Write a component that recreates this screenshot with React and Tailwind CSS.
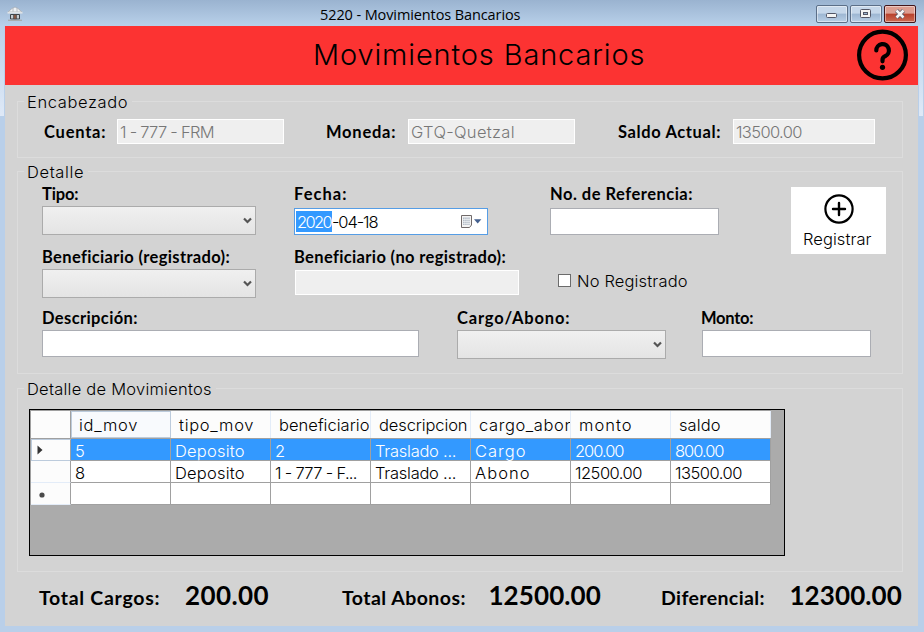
import { useLayoutEffect, useRef } from "react";

/* Single line of text whose tracking is tuned so it spans `w` pixels. */
function Fit({ w, className = "", children }) {
  const ref = useRef(null);
  useLayoutEffect(() => {
    const el = ref.current;
    el.style.letterSpacing = "0px";
    const natural = el.getBoundingClientRect().width;
    el.style.letterSpacing = `${(w + 1.5 - natural) / Math.max(1, children.length - 1)}px`;
  }, [w, children]);
  return (
    <span ref={ref} className={`block w-max shrink-0 self-start whitespace-pre ${className}`}>
      {children}
    </span>
  );
}

function Label({ w, className = "", children }) {
  return (
    <Fit w={w - 1} className={`font-[Lato] text-[16.5px] leading-5 font-bold ${className}`}>
      {children}
    </Fit>
  );
}

function Group({ title, w, className, children }) {
  return (
    <fieldset className={`w-[886px] border border-[#dcdcdc] ${className}`}>
      <legend className="ml-[6px] h-[17px] pr-1 pl-[3px]">
        <Fit w={w} className="leading-[19px]">{title}</Fit>
      </legend>
      {children}
    </fieldset>
  );
}

function ReadOnly({ className, w, children }) {
  return (
    <div className={`h-[25px] shrink-0 border border-white bg-[#efefef] pl-[2px] text-[#777] ${className}`}>
      {children && <Fit w={w} className="mt-[2px] leading-5">{children}</Fit>}
    </div>
  );
}

function Select({ className }) {
  return (
    <div className={`mt-[2px] flex h-[29px] items-center justify-end border border-[#ababab] bg-linear-to-b from-[#f0f0f0] to-[#e4e4e4] pr-[3px] ${className}`}>
      <svg width="9" height="8" viewBox="0 0 9 8" className="mt-px">
        <path d="M1 1.5 L4.5 5 L8 1.5" fill="none" stroke="#555" strokeWidth="2.2" />
      </svg>
    </div>
  );
}

function Input({ className }) {
  return <div className={`h-[27px] border border-[#abadb3] bg-white ${className}`} />;
}

const columns = [
  ["id_mov", 57], ["tipo_mov", 73], ["beneficiario", 89], ["descripcion", 87],
  ["cargo_abono", 104], ["monto", 51], ["saldo", 40],
];

const rows = [
  [["5", 8], ["Deposito", 68], ["2", 8], ["Traslado ...", 80], ["Cargo", 49], ["200.00", 48], ["800.00", 48]],
  [["8", 8], ["Deposito", 68], ["1 - 777 - F...", 81], ["Traslado ...", 80], ["Abono", 53], ["12500.00", 66], ["13500.00", 66]],
];

function DataGrid() {
  return (
    <div className="mt-[12px] ml-[11px] h-[147px] w-[756px] border border-black bg-[#ababab]">
      <div className="w-[741px] border-t border-l border-[#a0a0a0]">
        <div className="flex h-[28px] border-b border-[#a0a0a0] bg-[#fcfcfc]">
          <div className="w-[40px] border-r border-[#a0a0a0]" />
          {columns.map(([name, w], i) => (
            <div
              key={name}
              className={`w-[100px] overflow-hidden ${i === 0 ? "border border-[#bccbdc] bg-[#f8fafd] pt-[3px] pl-[7px]" : "border-r border-[#e3ecf8] pt-[4px] pl-[8px]"}`}
            >
              <Fit w={w} className="leading-5">{name}</Fit>
            </div>
          ))}
        </div>
        {rows.map((row, r) => (
          <div key={r} className="flex h-[22px]">
            <div className={`flex w-[40px] items-center bg-[#fcfcfc] pl-[5px] ${r === 0 ? "border border-[#bccbdc] border-r-[#a0a0a0]" : "border-r border-b border-r-[#a0a0a0] border-b-[#e3ecf8]"}`}>
              {r === 0 && (
                <svg width="6" height="10" viewBox="0 0 6 10">
                  <path d="M0.5 0.5 L5.5 5 L0.5 9.5 Z" fill="#333" />
                </svg>
              )}
            </div>
            {row.map(([text, w], i) => (
              <div
                key={i}
                className={`w-[100px] border-r border-b border-[#a0a0a0] pt-[3px] pl-[4px] ${r === 0 ? "bg-[#3399ff] text-white" : "bg-white"}`}
              >
                <Fit w={w} className="leading-[19px]">{text}</Fit>
              </div>
            ))}
          </div>
        ))}
        <div className="flex h-[22px]">
          <div className="flex w-[40px] items-center border-r border-b border-[#e3ecf8] border-r-[#a0a0a0] bg-[#fcfcfc] pl-[8px]">
            <svg width="6" height="6" viewBox="0 0 6 6" className="mt-[2px]">
              <circle cx="3" cy="3" r="2.6" fill="#4a4a4a" />
            </svg>
          </div>
          {columns.map(([name]) => (
            <div key={name} className="w-[100px] border-r border-b border-[#a0a0a0] bg-white" />
          ))}
        </div>
      </div>
    </div>
  );
}

function TitleBar() {
  const button = "flex h-[18px] w-[32px] items-center justify-center rounded-[2px] border shadow-[inset_0_0_0_1px_rgba(255,255,255,0.45)]";
  const blue = "border-[#5c6f88] bg-linear-to-b from-[#c6d7ea] from-45% via-[#9db6d2] via-50% to-[#b8cfe6]";
  return (
    <div className="flex h-[26px] items-start bg-linear-to-b from-[#9ab3d0] to-[#b9d1ea] pl-[7px]">
      <svg width="16" height="16" viewBox="0 0 16 16" className="mt-[6px]">
        <path d="M1 6 L5 2.5 L8 1 L11 2.5 L15 6 Z" fill="#eef1f4" stroke="#9ea5ad" strokeWidth="0.7" />
        <path d="M6 2 V6 M10 2 V6" stroke="#b4bac1" />
        <path d="M0.5 6.7 H15.5" stroke="#dfe3e7" strokeWidth="1.8" />
        <path d="M3.5 8.5 H12.5 V13 H3.5 Z" fill="#c7ccd1" stroke="#3d444a" />
        <path d="M6.5 8.5 H9.5 V13 H6.5 Z" fill="#855845" stroke="#3d444a" strokeWidth="0.6" />
        <path d="M1 14.3 H15" stroke="#a8aaab" strokeWidth="1.3" />
      </svg>
      <Fit w={199} className="mt-[5px] ml-[297px] font-['Open_Sans'] text-[14.5px] leading-5 font-normal">5220 - Movimientos Bancarios</Fit>
      <div className="mt-[5px] mr-[8px] ml-auto flex gap-[2px]">
        <div className={`${button} ${blue}`}>
          <svg width="12" height="6" viewBox="0 0 12 6" className="mt-[3px]">
            <rect x="0.5" y="0.5" width="10" height="4" rx="1" fill="#f4f4f4" stroke="#535666" />
          </svg>
        </div>
        <div className={`${button} ${blue}`}>
          <svg width="12" height="10" viewBox="0 0 12 10">
            <rect x="0.5" y="0.5" width="10" height="8" rx="1" fill="#f4f4f4" stroke="#535666" />
            <rect x="3.5" y="3.5" width="4" height="2" fill="#9db6d2" stroke="#535666" />
          </svg>
        </div>
        <div className={`${button} border-[#43161b] bg-linear-to-b from-[#dd9d90] from-45% via-[#b8402b] via-50% to-[#cc6a52]`}>
          <svg width="12" height="10" viewBox="0 0 12 10">
            <path d="M2.5 1.5 L9.5 8.5 M9.5 1.5 L2.5 8.5" stroke="#535666" strokeWidth="4" />
            <path d="M2.5 1.5 L9.5 8.5 M9.5 1.5 L2.5 8.5" stroke="#f6f6f6" strokeWidth="2.6" />
          </svg>
        </div>
      </div>
    </div>
  );
}

function Edge() {
  return (
    <div className="w-[5px] shrink-0 bg-[#b9cfe9]">
      <div className="h-[90px] w-[4px] bg-linear-to-b from-[#b9d1ea] to-[#dfe9f7]" />
    </div>
  );
}

function Total({ label, lw, value, vw, className }) {
  return (
    <div className={`flex shrink-0 items-start font-[Lato] font-bold ${className}`}>
      <Fit w={lw - 1} className="mt-[7px] text-[19.5px] leading-6">{label}</Fit>
      <Fit w={vw - 1} className="ml-auto text-[26px] leading-8">{value}</Fit>
    </div>
  );
}

export default function App() {
  return (
    <div className="h-[632px] w-[924px] overflow-hidden bg-[#b9cfe9] font-[Inter] text-[16.5px] font-light text-black">
      <TitleBar />
      <div className="flex h-[600px]">
        <Edge />
        <main className="w-[913px] bg-[#d3d3d3]">
          <header className="flex h-[59px] items-start bg-[#fc3332]">
            <Fit w={330} className="mt-[9px] ml-[308px] text-[29px] leading-10">Movimientos Bancarios</Fit>
            <svg width="52" height="52" viewBox="0 0 52 52" className="mt-[3px] mr-[9px] ml-auto" fill="none" stroke="#000">
              <circle cx="25.5" cy="26" r="23.4" strokeWidth="4.2" />
              <path d="M19.3 21.5 A6.3 6.3 0 1 1 28.1 27.2 Q25.5 28.4 25.5 31 V32.3" strokeWidth="4.2" strokeLinecap="round" />
              <circle cx="25.5" cy="38.3" r="2.6" fill="#000" stroke="none" />
            </svg>
          </header>

          <div className="flex flex-col pt-[8px] pl-[12px]">
            <Group title="Encabezado" w={99} className="h-[65px]">
              <div className="flex items-start pt-[9px] pl-[26px]">
                <div className="flex w-[73px] shrink-0"><Label w={61} className="mt-[3px]">Cuenta:</Label></div>
                <ReadOnly w={93} className="w-[167px]">1 - 777 - FRM</ReadOnly>
                <div className="ml-[42px] flex w-[82px] shrink-0"><Label w={69} className="mt-[3px]">Moneda:</Label></div>
                <ReadOnly w={102} className="w-[167px]">GTQ-Quetzal</ReadOnly>
                <div className="ml-[43px] flex w-[115px] shrink-0"><Label w={102} className="mt-[3px]">Saldo Actual:</Label></div>
                <ReadOnly w={65} className="w-[142px]">13500.00</ReadOnly>
              </div>
            </Group>

            <Group title="Detalle" w={55} className="mt-[5px] h-[211px]">
              <div className="flex items-start pt-[4px] pl-[24px]">
                <div className="w-[749px]">
                  <div className="flex h-[63px]">
                    <div className="flex w-[214px] flex-col">
                      <Label w={36}>Tipo:</Label>
                      <Select className="w-[214px]" />
                    </div>
                    <div className="ml-[38px] flex w-[194px] flex-col">
                      <Label w={52}>Fecha:</Label>
                      <div className="mt-[4px] flex h-[27px] w-[194px] items-start border border-[#569de5] bg-white pl-px">
                        <span className="mt-[2px] flex h-[21px] w-[36px] justify-center bg-[#3399ff] text-white">
                          <Fit w={34} className="mt-[1px] leading-5">2020</Fit>
                        </span>
                        <Fit w={45} className="mt-[3px] leading-5">-04-18</Fit>
                        <svg width="22" height="14" viewBox="0 0 22 14" className="mt-[6px] mr-[5px] ml-auto">
                          <path d="M1.5 0.5 H11.5 V10 L9.5 12.5 H1.5 Z" fill="#f4f4f4" stroke="#716a6a" />
                          <path d="M3 2.5 H10 V10 H3 Z" fill="#b4bdc8" />
                          <path d="M3 4.5 H10 M3 6.5 H10 M3 8.5 H10 M4.8 2.5 V10 M7 2.5 V10 M9 2.5 V10" stroke="#fff" strokeWidth="0.5" />
                          <path d="M14 4.2 H21.4 L17.7 8.6 Z" fill="#44608f" />
                        </svg>
                      </div>
                    </div>
                    <div className="ml-[62px] flex w-[169px] flex-col">
                      <Label w={142}>No. de Referencia:</Label>
                      <Input className="mt-[4px] w-[169px]" />
                    </div>
                  </div>
                  <div className="flex h-[61px]">
                    <div className="flex w-[214px] flex-col">
                      <Label w={187}>Beneficiario (registrado):</Label>
                      <Select className="w-[214px]" />
                    </div>
                    <div className="ml-[38px] flex w-[226px] flex-col">
                      <Label w={211}>Beneficiario (no registrado):</Label>
                      <ReadOnly className="mt-[3px] ml-[1px] w-[224px]" />
                    </div>
                    <div className="mt-[24px] ml-[38px] flex items-start">
                      <div className="mt-[3px] h-[13px] w-[13px] border border-[#6b6b6b] bg-white" />
                      <Fit w={109} className="ml-[6px] leading-5">No Registrado</Fit>
                    </div>
                  </div>
                </div>
                <button className="mt-[3px] flex h-[67px] w-[95px] shrink-0 flex-col items-center bg-white">
                  <svg width="30" height="30" viewBox="0 0 30 30" className="mt-[7px] ml-px" fill="none" stroke="#000">
                    <circle cx="15" cy="15" r="13.6" strokeWidth="2.2" />
                    <path d="M15 9 V21 M9 15 H21" strokeWidth="2.4" strokeLinecap="round" />
                  </svg>
                  <Fit w={67} className="mt-[5px] ml-[12px] leading-5">Registrar</Fit>
                </button>
              </div>
              <div className="flex pl-[24px]">
                <div className="flex w-[377px] flex-col">
                  <Label w={95}>Descripción:</Label>
                  <Input className="mt-[2px] w-[377px]" />
                </div>
                <div className="ml-[38px] flex w-[209px] flex-col">
                  <Label w={112}>Cargo/Abono:</Label>
                  <Select className="w-[209px]" />
                </div>
                <div className="ml-[35px] flex w-[170px] flex-col">
                  <Label w={52}>Monto:</Label>
                  <Input className="mt-[2px] ml-px w-[169px]" />
                </div>
              </div>
            </Group>

            <Group title="Detalle de Movimientos" w={183} className="mt-[6px] h-[192px]">
              <DataGrid />
            </Group>

            <div className="mt-[7px] flex pl-[22px]">
              <Total label="Total Cargos:" lw={120} value="200.00" vw={83} className="w-[230px]" />
              <Total label="Total Abonos:" lw={123} value="12500.00" vw={112} className="ml-[73px] w-[259px]" />
              <Total label="Diferencial:" lw={103} value="12300.00" vw={112} className="ml-[60px] w-[241px]" />
            </div>
          </div>
        </main>
        <div className="flex w-[6px] justify-end"><Edge /></div>
      </div>
    </div>
  );
}
